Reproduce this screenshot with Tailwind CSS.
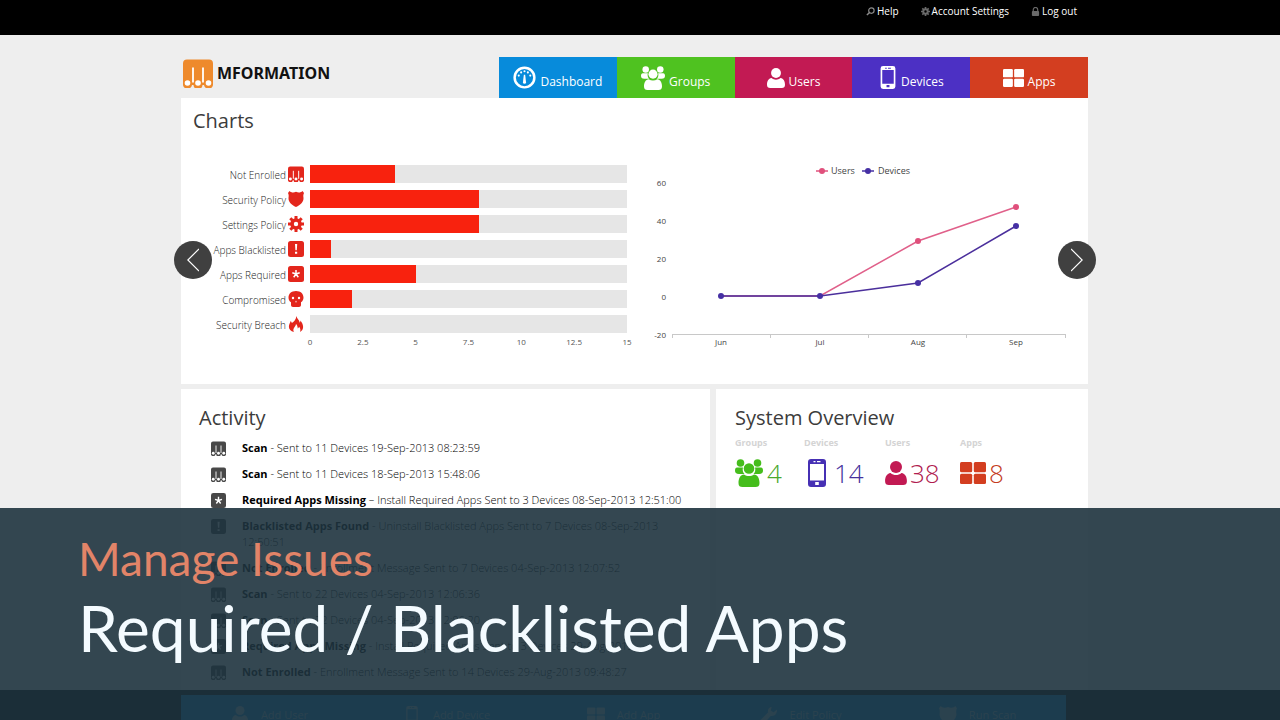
<!DOCTYPE html>
<html lang="en">
<head>
    <meta charset="UTF-8">
    <meta name="viewport" content="width=device-width, initial-scale=1.0">
    <title>Mformation Dashboard</title>
    <script src="https://cdn.jsdelivr.net/npm/@tailwindcss/browser@4"></script>
</head>
<body class="relative h-screen overflow-hidden bg-[#eeeeee] font-['Open_Sans',sans-serif] text-[#3c3c3c]">

    <!-- Shared icons -->
    <svg class="hidden">
        <symbol id="i-m" viewBox="0 0 30 28">
            <path fill="currentColor" d="M4 0h22a4 4 0 0 1 4 4v20a4 4 0 0 1-9 1.500h-1.500a4.500 4.500 0 0 1-9 0H9A4 4 0 0 1 0 24V4a4 4 0 0 1 4-4z"/>
            <path stroke="#fff" stroke-width="1.800" d="M10 8v15M20 8v15"/>
            <circle cx="4.500" cy="23.500" r="2.800" fill="#fff"/><circle cx="15" cy="23.500" r="2.800" fill="#fff"/><circle cx="25.500" cy="23.500" r="2.800" fill="#fff"/>
        </symbol>
        <symbol id="i-gauge" viewBox="0 0 24 24">
            <circle cx="12" cy="12" r="10.300" fill="none" stroke="currentColor" stroke-width="2.600"/>
            <path fill="currentColor" d="M11.300 9h1.400l.9 8a1.600 1.600 0 0 1-3.200 0z"/>
            <g fill="currentColor"><circle cx="6" cy="10" r="1.100"/><circle cx="8.500" cy="6.700" r="1.100"/><circle cx="12" cy="5.500" r="1.100"/><circle cx="15.500" cy="6.700" r="1.100"/><circle cx="18" cy="10" r="1.100"/></g>
        </symbol>
        <symbol id="i-groups" viewBox="0 0 28 28">
            <g fill="currentColor">
                <circle cx="5.500" cy="4" r="3.800"/><circle cx="22.500" cy="4" r="3.800"/>
                <path d="M2 8.500h6c-.8 2.500 0 5 1.500 6.500H4c-3 0-4-1.500-4-3.500 0-1.800.8-3 2-3zM26 8.500h-6c.8 2.500 0 5-1.500 6.500H24c3 0 4-1.500 4-3.500 0-1.800-.8-3-2-3z"/>
                <circle cx="14" cy="9.500" r="5.300"/>
                <path d="M9 15.500c3 2 7 2 10 0 3.500.5 5.500 3.500 5.500 8.500 0 3-1.500 4-4 4h-13c-2.500 0-4-1-4-4 0-5 2-8 5.500-8.500z"/>
            </g>
        </symbol>
        <symbol id="i-user" viewBox="0 0 20 22">
            <g fill="currentColor"><circle cx="10" cy="5.500" r="5.500"/><path d="M5 11c3 2.500 7 2.500 10 0 3.500.6 5 3.500 5 7.500 0 2.500-1.300 3.500-3.500 3.500h-13C1.300 22 0 21 0 18.500 0 14.500 1.500 11.600 5 11z"/></g>
        </symbol>
        <symbol id="i-phone" viewBox="0 0 18 28">
            <path fill="currentColor" fill-rule="evenodd" d="M3 0h12a3 3 0 0 1 3 3v22a3 3 0 0 1-3 3H3a3 3 0 0 1-3-3V3a3 3 0 0 1 3-3zM2 5v16.500h14V5zM5.500 2v1.200h2V2zM9 2v1.200h3.500V2zM7.200 23v3h3.600v-3z"/>
        </symbol>
        <symbol id="i-apps" viewBox="0 0 26 22">
            <g fill="currentColor"><rect width="12.200" height="10.200" rx="1.500"/><rect x="13.800" width="12.200" height="10.200" rx="1.500"/><rect y="11.800" width="12.200" height="10.200" rx="1.500"/><rect x="13.800" y="11.800" width="12.200" height="10.200" rx="1.500"/></g>
        </symbol>
        <symbol id="i-shield" viewBox="0 0 16 16">
            <path fill="currentColor" d="M1.500 0C3 1.600 5.500 2 8 .8 10.500 2 13 1.600 14.500 0L16 2c-.8 1.500-.8 3-.5 5 .2 4-3 7-7.500 9C3.500 14 .3 11 .5 7 .8 5 .8 3.500 0 2z"/>
        </symbol>
        <symbol id="i-gear" viewBox="0 0 16 16">
            <circle cx="8" cy="8" r="4" fill="none" stroke="currentColor" stroke-width="3.600"/>
            <path stroke="currentColor" stroke-width="3" d="M8 0v4M8 12v4M0 8h4M12 8h4M2.300 2.300l3 3M10.700 10.700l3 3M2.300 13.700l3-3M10.700 5.300l3-3"/>
        </symbol>
        <symbol id="i-alert" viewBox="0 0 16 16">
            <rect width="16" height="16" rx="2.500" fill="currentColor"/>
            <path fill="#fff" d="M7 3h2.200l-.4 6.200H7.400zM7 10.800h2.200v2H7z"/>
        </symbol>
        <symbol id="i-star" viewBox="0 0 16 16">
            <rect width="16" height="16" rx="2.500" fill="currentColor"/>
            <path stroke="#fff" stroke-width="1.500" d="M8 8V4M8 8l3.700-1.200M8 8l2.300 3.200M8 8l-2.300 3.200M8 8L4.300 6.800"/>
        </symbol>
        <symbol id="i-skull" viewBox="0 0 16 16">
            <path fill="currentColor" d="M8 0c4.700 0 7.500 2.800 7.500 6.500 0 2.200-.9 3.800-2.500 4.800V14c0 1.300-.8 2-2 2H5c-1.200 0-2-.7-2-2v-2.700C1.400 10.300.5 8.700.5 6.500.5 2.800 3.300 0 8 0z"/>
            <g fill="#fff"><circle cx="5" cy="7" r="1.200"/><circle cx="11" cy="7" r="1.200"/><path d="M8 9.500l.8 1.700H7.200z"/></g>
        </symbol>
        <symbol id="i-fire" viewBox="0 0 16 18">
            <path fill="currentColor" d="M8.500 0c.3 2.800 3.300 4.500 3.700 7.500.6-.6.8-1.500.8-2.500 2 2.500 3 5 3 7.500 0 2.500-1.300 4.300-3.500 5.500.8-2.200.5-4-1-5.800-.3 1-.8 1.600-1.500 2-.2-2.500-.8-4.200-2-5.200-.3 3-3 4.200-3 6.500 0 1 .2 1.700.7 2.500C2 17 0 15 0 12c0-2.500 1.300-4.300 2-6.500.8.800 1.200 1.600 1.300 2.500C5.500 6.500 8 4 8.500 0z"/>
        </symbol>
        <symbol id="i-search" viewBox="0 0 10 10">
            <circle cx="6" cy="4" r="3" fill="none" stroke="currentColor" stroke-width="1.300"/><path stroke="currentColor" stroke-width="1.600" d="M4 6L1 9"/>
        </symbol>
        <symbol id="i-lock" viewBox="0 0 10 10">
            <path fill="none" stroke="currentColor" stroke-width="1.300" d="M2.500 5V3a2.500 2.500 0 0 1 5 0v2"/><rect x="1" y="4.500" width="8" height="5.500" rx="1" fill="currentColor"/>
        </symbol>
        <symbol id="i-wrench" viewBox="0 0 20 20">
            <path fill="currentColor" d="M19 4l-4 3-3-2 1-4c-3 0-5 3-4 6L0 16c-1 2 2 5 4 4l8-9c4 1 7-2 7-7z"/>
        </symbol>
    </svg>

    <header class="flex h-[35px] justify-center bg-black pr-[11px]">
        <div class="flex w-full max-w-[907px] items-start justify-end gap-[22px] pt-[3px] pr-[11px] text-[10px] leading-4 text-white">
            <a href="#" class="flex items-center gap-[2px]"><svg class="size-[9px] text-[#8a8a8a]"><use href="#i-search"/></svg>Help</a>
            <a href="#" class="flex items-center gap-[2px]"><svg class="size-[9px] text-[#6a6a6a]"><use href="#i-gear"/></svg>Account Settings</a>
            <a href="#" class="flex items-center gap-[2px]"><svg class="size-[9px] text-[#6a6a6a]"><use href="#i-lock"/></svg>Log out</a>
        </div>
    </header>

    <div class="pr-[11px]">
        <main class="mx-auto max-w-[907px]">
            <div class="flex items-end justify-between pt-[22px]">
                <a href="#" class="flex items-center gap-1 pb-[10px] pl-[2px] font-['Noto_Sans',sans-serif] text-[16px] leading-[30px] font-bold text-[#111]">
                    <svg class="h-[29px] w-[30px] text-[#ee8a2c]"><use href="#i-m"/></svg>
                    MFORMATION
                </a>
                <nav class="grid w-[589px] grid-cols-5 text-[12px] text-white">
                    <a href="#" class="flex h-[41px] items-center justify-center gap-1 bg-[#078bdb]"><svg class="size-[23px]"><use href="#i-gauge"/></svg><span class="pt-2">Dashboard</span></a>
                    <a href="#" class="flex h-[41px] items-center justify-center gap-1 bg-[#4fc220]"><svg class="size-[24px]"><use href="#i-groups"/></svg><span class="pt-2">Groups</span></a>
                    <a href="#" class="flex h-[41px] items-center justify-center gap-1 bg-[#c21a53]"><svg class="h-5 w-[18px]"><use href="#i-user"/></svg><span class="pt-2">Users</span></a>
                    <a href="#" class="flex h-[41px] items-center justify-center gap-1 bg-[#4c30c4]"><svg class="h-[23px] w-[18px]"><use href="#i-phone"/></svg><span class="pt-2">Devices</span></a>
                    <a href="#" class="flex h-[41px] items-center justify-center gap-1 bg-[#d33e20]"><svg class="h-[18px] w-[21px]"><use href="#i-apps"/></svg><span class="pt-2">Apps</span></a>
                </nav>
            </div>

            <section class="relative h-[286px] bg-white px-3 pt-2">
                <h2 class="text-[20px] leading-[30px]">Charts</h2>
                <div class="flex justify-between pt-[25px]">
                    <div class="pl-[9px]">
                        <table class="text-[10px]">
                            <tbody id="bars"></tbody>
                        </table>
                        <div class="ml-[96px] flex w-[341px] justify-between text-[8px] leading-3 text-[#555]">
                            <span class="w-6 text-center">0</span><span class="w-6 text-center">2.5</span><span class="w-6 text-center">5</span><span class="w-6 text-center">7.5</span><span class="w-6 text-center">10</span><span class="w-6 text-center">12.5</span><span class="w-6 text-center">15</span>
                        </div>
                    </div>
                    <svg class="h-[190px] w-[426px]" viewBox="650 161 426 190" font-size="8" fill="#444">
                        <g fill="none" stroke-width="1.500">
                            <path stroke="#e0507c" d="M816 171h12"/><path stroke="#4630a4" d="M862 171h12"/>
                            <path stroke="#e0608a" d="M721 296H820L918 241L1016 207"/>
                            <path stroke="#4b2f9c" d="M721 296H820L918 283L1016 226"/>
                            <path stroke="#c8c8c8" stroke-width="1" d="M672 334.500H1066M672.500 334v4M770.500 334v4M868.500 334v4M966.500 334v4M1065.500 334v4"/>
                        </g>
                        <g fill="#e0507c"><circle cx="822" cy="171" r="3"/><circle cx="918" cy="241" r="3"/><circle cx="1016" cy="207" r="3"/></g>
                        <g fill="#4630a4"><circle cx="868" cy="171" r="3"/><circle cx="721" cy="296" r="3"/><circle cx="820" cy="296" r="3"/><circle cx="918" cy="283" r="3"/><circle cx="1016" cy="226" r="3"/></g>
                        <g font-size="9"><text x="831" y="174">Users</text><text x="878" y="174">Devices</text></g>
                        <g text-anchor="end"><text x="666" y="186">60</text><text x="666" y="224">40</text><text x="666" y="262">20</text><text x="666" y="300">0</text><text x="666" y="338">-20</text></g>
                        <g text-anchor="middle"><text x="721" y="345">Jun</text><text x="820" y="345">Jul</text><text x="918" y="345">Aug</text><text x="1016" y="345">Sep</text></g>
                    </svg>
                </div>
                <button aria-label="Previous" class="absolute top-[143px] -left-[7px] flex size-[38px] items-center justify-center rounded-full bg-[#404040]">
                    <svg class="h-6 w-3" viewBox="0 0 12 24" fill="none" stroke="#fff" stroke-width="1.200"><path d="M12 1L0.800 12 12 23"/></svg>
                </button>
                <button aria-label="Next" class="absolute top-[143px] -right-[8px] flex size-[38px] items-center justify-center rounded-full bg-[#404040]">
                    <svg class="h-6 w-3" viewBox="0 0 12 24" fill="none" stroke="#fff" stroke-width="1.200"><path d="M0 1l11.200 11L0 23"/></svg>
                </button>
            </section>

            <div class="flex gap-[6px] pt-[5px]">
                <section class="h-[301px] flex-1 bg-white pt-[14px] pl-[18px]">
                    <h2 class="text-[20px] leading-[30px]">Activity</h2>
                    <ul id="activity" class="flex flex-col gap-[10px] pt-[7px] pr-6 pl-3 text-[11px] leading-4 font-light text-black"></ul>
                </section>
                <section class="w-[372px] bg-white pt-[14px] pl-[19px]">
                    <h2 class="text-[20px] leading-[30px]">System Overview</h2>
                    <dl class="flex pt-[3px] text-[26px] leading-[36px] font-light">
                        <div class="w-[69px]"><dt class="text-[9px] leading-[14px] font-bold text-[#d4d4d4]">Groups</dt><dd class="flex items-center gap-1 pt-[5px] text-[#4aa82c]"><svg class="size-[28px] text-[#45bd1c]"><use href="#i-groups"/></svg>4</dd></div>
                        <div class="w-[81px]"><dt class="text-[9px] leading-[14px] font-bold text-[#d4d4d4]">Devices</dt><dd class="flex items-center gap-2 pt-[5px] pl-1 text-[#46309c]"><svg class="h-[28px] w-[18px] text-[#4630b4]"><use href="#i-phone"/></svg>14</dd></div>
                        <div class="w-[75px]"><dt class="text-[9px] leading-[14px] font-bold text-[#d4d4d4]">Users</dt><dd class="flex items-center gap-[3px] pt-[5px] text-[#b01c50]"><svg class="h-[24px] w-[22px] text-[#c21a53]"><use href="#i-user"/></svg>38</dd></div>
                        <div><dt class="text-[9px] leading-[14px] font-bold text-[#d4d4d4]">Apps</dt><dd class="flex items-center gap-[3px] pt-[5px] text-[#c43c22]"><svg class="h-[22px] w-[26px] text-[#d33e20]"><use href="#i-apps"/></svg>8</dd></div>
                    </dl>
                </section>
            </div>
        </main>
    </div>

    <footer class="bg-black pt-[5px] pr-[11px]">
        <div class="mx-auto max-w-[907px] pr-[22px]">
            <nav class="grid h-10 grid-cols-5 bg-[#0a90e0] text-[11px] text-[#9ec6dc]">
                <a href="#" class="flex items-center justify-center gap-3"><svg class="size-[18px]"><use href="#i-user"/></svg>Add User</a>
                <a href="#" class="flex items-center justify-center gap-3"><svg class="size-[18px]"><use href="#i-phone"/></svg>Add Device</a>
                <a href="#" class="flex items-center justify-center gap-3"><svg class="size-[18px]"><use href="#i-apps"/></svg>Add App</a>
                <a href="#" class="flex items-center justify-center gap-3"><svg class="size-[18px]"><use href="#i-wrench"/></svg>Edit Policy</a>
                <a href="#" class="flex items-center justify-center gap-3"><svg class="size-[18px]"><use href="#i-shield"/></svg>Run Scan</a>
            </nav>
        </div>
    </footer>

    <!-- Caption banner -->
    <div class="absolute inset-x-0 bottom-0 h-[212px] bg-[#1e333e]/90 pt-[22px] pl-[78px] font-[Lato,sans-serif]">
        <p class="text-[46px] leading-[58px] text-[#e28468]">Manage Issues</p>
        <h1 class="text-[64px] leading-[80px] text-[#f4fbff]">Required / Blacklisted Apps</h1>
    </div>

    <script>
        // Issues chart, scale 0 - 15
        const issues = [
            ['Not Enrolled', 'i-m', 4],
            ['Security Policy', 'i-shield', 8],
            ['Settings Policy', 'i-gear', 8],
            ['Apps Blacklisted', 'i-alert', 1],
            ['Apps Required', 'i-star', 5],
            ['Compromised', 'i-skull', 2],
            ['Security Breach', 'i-fire', 0]
        ];
        document.getElementById('bars').innerHTML = issues.map(([name, icon, value]) => `
            <tr class="h-[25px]">
                <th scope="row" class="w-[84px] p-0 pt-[3px] text-right font-light whitespace-nowrap text-[#222]">${name}</th>
                <td class="w-[24px] p-0 pl-[2px]"><svg class="size-4 text-[#e3261c]"><use href="#${icon}"/></svg></td>
                <td class="w-[317px] p-0"><div class="h-[18px] w-[317px] bg-[#e6e6e6]"><div class="h-full bg-[#f8220e]" style="width:${value / 15 * 100}%"></div></div></td>
            </tr>`).join('');

        const activity = [
            ['i-m', 'Scan', '- Sent to 11 Devices 19-Sep-2013 08:23:59'],
            ['i-m', 'Scan', '- Sent to 11 Devices 18-Sep-2013 15:48:06'],
            ['i-star', 'Required Apps Missing', '– Install Required Apps Sent to 3 Devices 08-Sep-2013 12:51:00'],
            ['i-alert', 'Blacklisted Apps Found', '- Uninstall Blacklisted Apps Sent to 7 Devices 08-Sep-2013 12:50:51'],
            ['i-m', 'Not Enrolled', '- Enrollment Message Sent to 7 Devices 04-Sep-2013 12:07:52'],
            ['i-m', 'Scan', '- Sent to 22 Devices 04-Sep-2013 12:06:36'],
            ['i-m', 'Scan', '- Sent to 22 Devices 04-Sep-2013 12:06:20'],
            ['i-star', 'Required Apps Missing', '- Install Required Apps Sent to 3 Devices 29-Aug-2013'],
            ['i-m', 'Not Enrolled', '- Enrollment Message Sent to 14 Devices 29-Aug-2013 09:48:27']
        ];
        document.getElementById('activity').innerHTML = activity.map(([icon, title, text]) => `
            <li class="flex gap-4"><svg class="mt-px size-[15px] shrink-0 text-[#484848]"><use href="#${icon}"/></svg><span><b class="font-bold">${title}</b> ${text}</span></li>`).join('');
    </script>

</body>
</html>
